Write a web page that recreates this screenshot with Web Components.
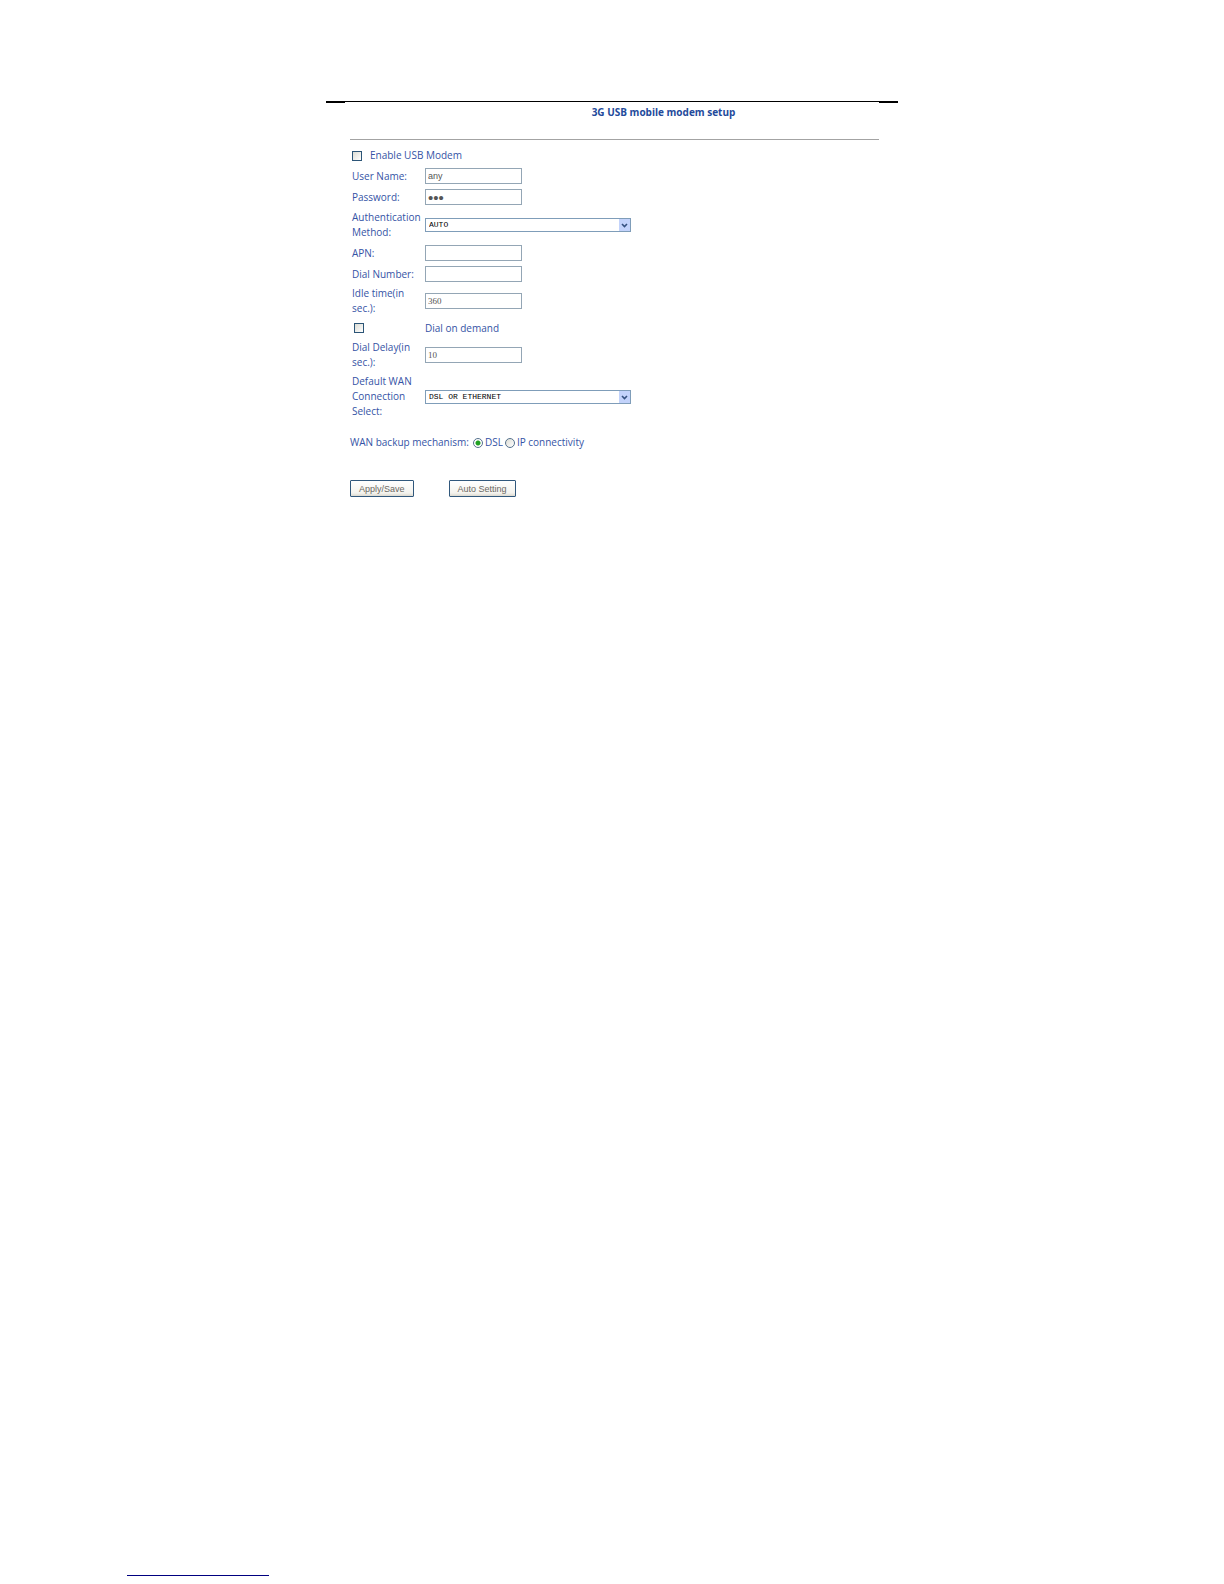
<!DOCTYPE html>
<html lang="en">
<head>
<meta charset="utf-8">
<title>3G USB mobile modem setup</title>
<style>
    body {
        margin: 0;
        background: #fff;
        color: #3553a5;
        font: 10px/15px "Open Sans", "Noto Sans", sans-serif;
    }
</style>
</head>
<body>
<modem-page></modem-page>

<script>
const fieldStyle = `
    * { box-sizing: border-box; }
    input, select, button { margin: 0; font: inherit; border-radius: 0; }
    input[type="checkbox"], input[type="radio"] {
        appearance: none;
        flex: none;
        width: 10px;
        height: 10px;
        border: 1px solid #2c5577;
        background: linear-gradient(135deg, #dcdcd4, #fff);
    }
    input[type="radio"] {
        border-color: #55718c;
        border-radius: 50%;
    }
    input[type="radio"]:checked {
        background: radial-gradient(circle, #21a121 2px, #fff 3px);
    }
`;

class SettingRow extends HTMLElement {
    constructor() {
        super();
        this.attachShadow({ mode: 'open' });
    }

    connectedCallback() {
        const label = this.getAttribute('label');
        const type = this.getAttribute('type') || 'text';
        const value = this.getAttribute('value') || '';
        let row = `<label for="field">${label}</label>`;
        if (type === 'select') {
            row += `
                <div class="select">
                    <select id="field"><option>${value}</option></select>
                    <svg viewBox="0 0 11 12" aria-hidden="true">
                        <rect width="11" height="12" fill="#c3d3fb"/>
                        <path d="M3 5l2.5 2.5L8 5" fill="none" stroke="#35517f" stroke-width="1.6"/>
                    </svg>
                </div>`;
        } else if (type === 'checkbox') {
            row = `<span class="tick"><input id="field" type="checkbox"></span>${row}`;
        } else {
            row += `<input id="field" class="box" type="${type}" value="${value}">`;
        }
        this.shadowRoot.innerHTML = `
            <style>
                ${fieldStyle}
                :host {
                    display: grid;
                    grid-template-columns: 73px 1fr;
                    align-items: center;
                    min-height: 18px;
                }
                :host([type="select"]) { padding: 1px 0; }
                .tick { display: flex; padding-left: 2px; }
                .box {
                    width: 97px;
                    height: 16px;
                    padding: 0 2px;
                    border: 1px solid #94a6b5;
                    background: #fff;
                    color: #555;
                    font: 9px "Liberation Sans", sans-serif;
                }
                .box[type="password"] { font-size: 15px; }
                :host([serif]) .box { font-family: "Liberation Serif", serif; }
                .select { display: grid; width: 206px; height: 14px; }
                select, svg { grid-area: 1 / 1; }
                select {
                    appearance: none;
                    width: 100%;
                    height: 14px;
                    padding: 0 14px 0 3px;
                    border: 1px solid #7f9db9;
                    background: #fff;
                    color: #000;
                    font: 8px/12px "Liberation Mono", monospace;
                }
                svg {
                    justify-self: end;
                    align-self: center;
                    width: 11px;
                    height: 12px;
                    margin-right: 1px;
                    pointer-events: none;
                }
            </style>
            ${row}
        `;
    }
}

class BackupChoice extends HTMLElement {
    constructor() {
        super();
        this.attachShadow({ mode: 'open' });
    }

    connectedCallback() {
        this.shadowRoot.innerHTML = `
            <style>
                ${fieldStyle}
                :host { display: block; }
                div { display: flex; align-items: center; }
                .title { margin-right: 4px; }
                label { display: flex; align-items: center; gap: 2px; margin-right: 2px; }
            </style>
            <div role="radiogroup" aria-labelledby="title">
                <span class="title" id="title"><slot></slot></span>
                <label><input type="radio" name="backup" checked>DSL</label>
                <label><input type="radio" name="backup">IP connectivity</label>
            </div>
        `;
    }
}

class PushButton extends HTMLElement {
    constructor() {
        super();
        this.attachShadow({ mode: 'open' });
    }

    connectedCallback() {
        this.shadowRoot.innerHTML = `
            <style>
                :host { display: block; }
                button {
                    display: block;
                    height: 17px;
                    margin: 0;
                    padding: 0 8px;
                    border: 1px solid #31587c;
                    border-radius: 1px;
                    background: linear-gradient(#fff, #f4f3ee 80%, #dcd9cf);
                    color: #6b6862;
                    font: 9px/14px "Liberation Sans", sans-serif;
                }
            </style>
            <button type="button"><slot></slot></button>
        `;
    }
}

class ModemPage extends HTMLElement {
    constructor() {
        super();
        this.attachShadow({ mode: 'open' });
    }

    connectedCallback() {
        this.shadowRoot.innerHTML = `
            <style>
                ${fieldStyle}
                :host {
                    display: flex;
                    flex-direction: column;
                    min-height: 100vh;
                    box-sizing: border-box;
                    padding-top: 101px;
                }
                main { width: 100%; max-width: 572px; margin: 0 auto; }
                .topline { display: flex; height: 2px; }
                .topline i { width: 19px; background: #000; }
                .topline b { flex: 1; border-top: 1px solid #000; }
                .content { padding: 0 19px 0 24px; }
                h1 {
                    margin: 0;
                    padding: 2px 0 19px 98px;
                    border-bottom: 1px solid #a3a3a3;
                    color: #234a9b;
                    font-size: 10px;
                    line-height: 15px;
                    text-align: center;
                }
                .enable { display: flex; align-items: center; gap: 8px; padding: 8px 0 4px 2px; }
                .rows { display: flex; flex-direction: column; gap: 3px; padding-left: 2px; }
                backup-choice { margin-top: 15px; }
                .buttons { display: flex; gap: 35px; margin-top: 30px; }
                footer { margin-top: auto; padding: 0 127px 8px; }
                footer hr { width: 142px; margin: 0; border: 0; border-top: 1px solid #000080; }
            </style>
            <main>
                <div class="topline"><i></i><b></b><i></i></div>
                <form class="content">
                    <h1>3G USB mobile modem setup</h1>
                    <label class="enable"><input type="checkbox">Enable USB Modem</label>
                    <div class="rows">
                        <setting-row label="User Name:" value="any"></setting-row>
                        <setting-row label="Password:" type="password" value="any"></setting-row>
                        <setting-row label="Authentication Method:" type="select" value="AUTO"></setting-row>
                        <setting-row label="APN:"></setting-row>
                        <setting-row label="Dial Number:"></setting-row>
                        <setting-row label="Idle time(in sec.):" value="360" serif></setting-row>
                        <setting-row label="Dial on demand" type="checkbox"></setting-row>
                        <setting-row label="Dial Delay(in sec.):" value="10" serif></setting-row>
                        <setting-row label="Default WAN Connection Select:" type="select" value="DSL OR ETHERNET"></setting-row>
                    </div>
                    <backup-choice>WAN backup mechanism:</backup-choice>
                    <div class="buttons">
                        <push-button>Apply/Save</push-button>
                        <push-button>Auto Setting</push-button>
                    </div>
                </form>
            </main>
            <footer><hr></footer>
        `;
    }
}

customElements.define('setting-row', SettingRow);
customElements.define('backup-choice', BackupChoice);
customElements.define('push-button', PushButton);
customElements.define('modem-page', ModemPage);
</script>
</body>
</html>
